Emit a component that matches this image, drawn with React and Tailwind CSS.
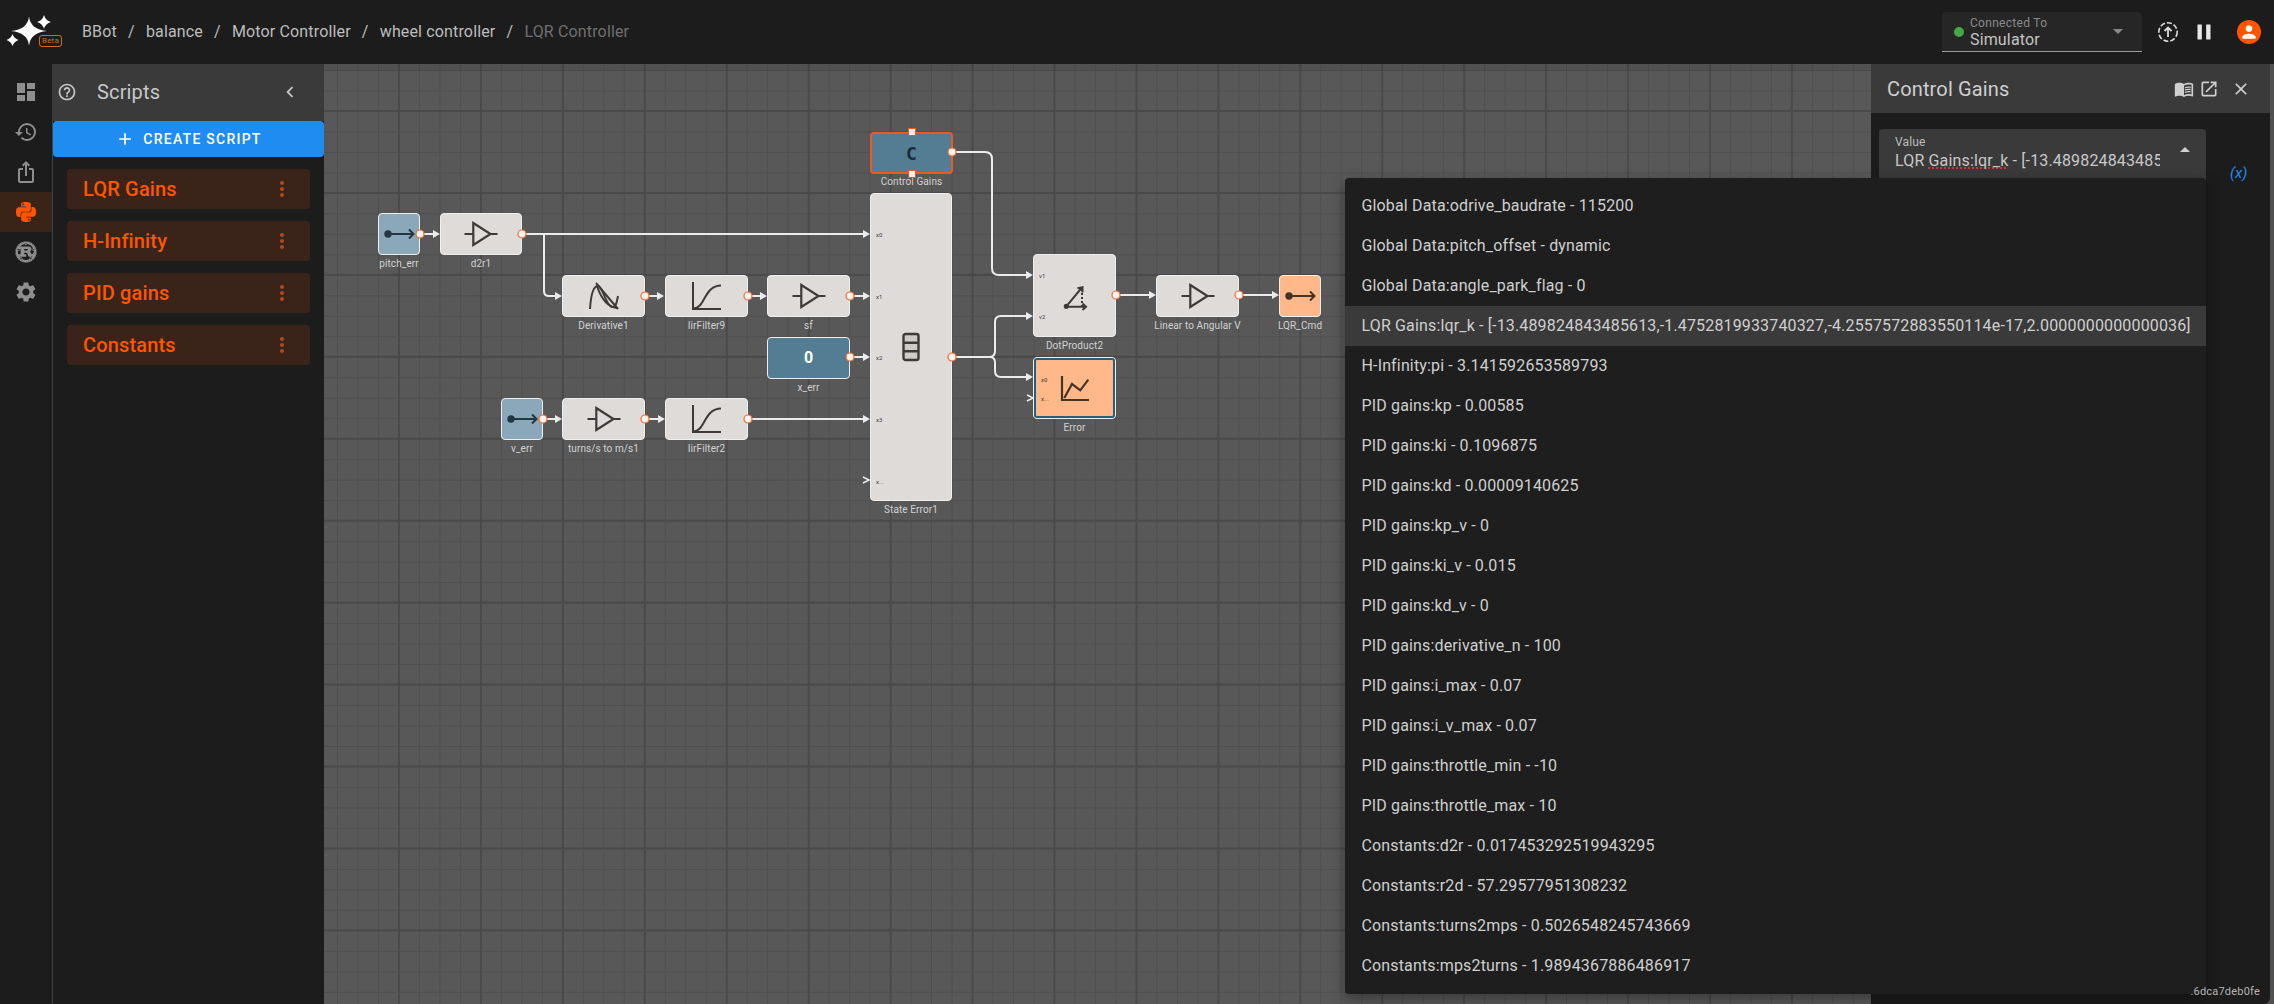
import React from "react";
import { MdDashboard, MdHistory, MdIosShare, MdSettings, MdHelpOutline, MdChevronLeft, MdAdd, MdMoreVert, MdMenuBook, MdOpenInNew, MdClose, MdPerson, MdPause } from "react-icons/md";
import { FaRust } from "react-icons/fa";
import { SiPython } from "react-icons/si";

const crumbs = ["BBot", "balance", "Motor Controller", "wheel controller"];
const scripts = ["LQR Gains", "H-Infinity", "PID gains", "Constants"];
const options = [
  "Global Data:odrive_baudrate - 115200",
  "Global Data:pitch_offset - dynamic",
  "Global Data:angle_park_flag - 0",
  "LQR Gains:lqr_k - [-13.489824843485613,-1.4752819933740327,-4.2557572883550114e-17,2.0000000000000036]",
  "H-Infinity:pi - 3.141592653589793",
  "PID gains:kp - 0.00585",
  "PID gains:ki - 0.1096875",
  "PID gains:kd - 0.00009140625",
  "PID gains:kp_v - 0",
  "PID gains:ki_v - 0.015",
  "PID gains:kd_v - 0",
  "PID gains:derivative_n - 100",
  "PID gains:i_max - 0.07",
  "PID gains:i_v_max - 0.07",
  "PID gains:throttle_min - -10",
  "PID gains:throttle_max - 10",
  "Constants:d2r - 0.017453292519943295",
  "Constants:r2d - 57.29577951308232",
  "Constants:turns2mps - 0.5026548245743669",
  "Constants:mps2turns - 1.9894367886486917",
];

function Gain() {
  return (
    <svg width="36" height="26" viewBox="0 0 36 26" fill="none" stroke="currentColor" strokeWidth="2.2">
      <path d="M1.5 13H10M34.5 13H27.5" />
      <path d="M10.3 2L27.5 13L10.3 24Z" />
    </svg>
  );
}
function Lpf() {
  return (
    <svg width="34" height="30" viewBox="0 0 34 30" fill="none" stroke="currentColor" strokeWidth="2">
      <path d="M3 1V28H31" />
      <path d="M3.5 27.5C15 27.5 14 4.5 31 4.5" />
    </svg>
  );
}
function Deriv() {
  return (
    <svg width="36" height="30" viewBox="0 0 36 30" fill="none" stroke="currentColor" strokeWidth="2">
      <path d="M4 28C5 12 8 5 12 5C17 5 19 24 26 26C30 27 31 20 32 15" />
      <path d="M10 2L32 28" />
      <path d="M11 5C15 17 21 26 31 27" />
    </svg>
  );
}
function Mux() {
  return (
    <svg width="18" height="30" viewBox="0 0 18 30" fill="#cfcbc9" stroke="currentColor" strokeWidth="2.4">
      <rect x="1.5" y="2" width="15" height="26" rx="2" />
      <path d="M1.5 10.7H16.5M1.5 19.3H16.5" />
    </svg>
  );
}
function Dot() {
  return (
    <svg width="32" height="32" viewBox="0 0 32 32" fill="none" stroke="currentColor" strokeWidth="2">
      <circle cx="7.3" cy="26.3" r="1.6" fill="currentColor" />
      <path d="M7.3 26.3L23 7.5M18.5 8.3L23.5 7.3L23.5 12.5" />
      <path d="M7.3 26.7H27M23.5 23.5L27 26.7L23.5 30" />
      <path d="M23 9V26" strokeDasharray="2 2" />
    </svg>
  );
}
function Scope() {
  return (
    <svg width="32" height="30" viewBox="0 0 32 30" fill="none" stroke="currentColor" strokeWidth="2.2">
      <path d="M3 3V27H30" />
      <path d="M5.3 25L13 11L21.3 17.3L29.3 6.7" />
    </svg>
  );
}
function PortIcon() {
  return (
    <svg width="32" height="16" viewBox="0 0 32 16" fill="none" stroke="currentColor" strokeWidth="2">
      <circle cx="5" cy="8" r="3.7" fill="currentColor" stroke="none" />
      <path d="M5 8H30.5M26 3.5L30.5 8L26 12.5" />
    </svg>
  );
}

const G = "bg-[#dfdbd9] text-[#3f3a38]";
const B = "bg-[#8aa8ba] text-[#243644]";
const K = "bg-[#537d92] text-white";
const O = "bg-[#ffb88a] text-[#453326]";

const nodes = [
  { l: 378, t: 213, w: 42, h: 42, c: B, i: <PortIcon />, n: "pitch_err" },
  { l: 440, t: 213, w: 82, h: 42, c: G, i: <Gain />, n: "d2r1" },
  { l: 562, t: 275, w: 83, h: 42, c: G, i: <Deriv />, n: "Derivative1" },
  { l: 665, t: 275, w: 83, h: 42, c: G, i: <Lpf />, n: "IirFilter9" },
  { l: 767, t: 275, w: 83, h: 42, c: G, i: <Gain />, n: "sf" },
  { l: 767, t: 337, w: 83, h: 42, c: K, i: <span className="text-[16px] font-bold">0</span>, n: "x_err" },
  { l: 501, t: 398, w: 42, h: 42, c: B, i: <PortIcon />, n: "v_err" },
  { l: 562, t: 398, w: 83, h: 42, c: G, i: <Gain />, n: "turns/s to m/s1" },
  { l: 665, t: 398, w: 83, h: 42, c: G, i: <Lpf />, n: "IirFilter2" },
  { l: 870, t: 193, w: 82, h: 308, c: G, i: <Mux />, n: "State Error1", ports: [["x0", 41], ["x1", 103], ["x2", 164], ["x3", 226], ["x...", 288]] },
  { l: 1033, t: 254, w: 83, h: 83, c: G, i: <Dot />, n: "DotProduct2", ports: [["v1", 21], ["v2", 62]] },
  { l: 1156, t: 275, w: 83, h: 42, c: G, i: <Gain />, n: "Linear to Angular V" },
  { l: 1279, t: 275, w: 42, h: 42, c: O, i: <PortIcon />, n: "LQR_Cmd" },
];

function Node({ d }) {
  return (
    <div
      className={`absolute flex items-center justify-center rounded-[4px] border-[1.5px] border-[#efefef] ${d.c}`}
      style={{ left: d.l - 324, top: d.t - 64, width: d.w, height: d.h }}
    >
      {d.i}
      {d.ports &&
        d.ports.map(([p, y]) => (
          <span key={p} className="absolute left-[5px] -translate-y-1/2 text-[6px] leading-none text-[#3f3a38]" style={{ top: y }}>
            {p}
          </span>
        ))}
      <span className="absolute left-1/2 top-full mt-[3px] -translate-x-1/2 whitespace-nowrap text-[10px] leading-[14px] tracking-[0.1px] text-[#d2d2d2]">
        {d.n}
      </span>
    </div>
  );
}

const wires = [
  "M420 234H434",
  "M522 234H864",
  "M544 234V291Q544 296 549 296H556",
  "M645 296H658",
  "M748 296H761",
  "M850 296H864",
  "M850 357H864",
  "M542 419H556",
  "M645 419H659",
  "M748 419H864",
  "M952 357H989Q995 357 995 351V322Q995 316 1001 316H1027",
  "M990 357Q995 357 995 363V371Q995 377 1001 377H1027",
  "M952 152H985Q992 152 992 159V268Q992 275 999 275H1027",
  "M1116 295H1150",
  "M1239 295H1273",
];
const heads = [[440, 234], [870, 234], [562, 296], [664, 296], [767, 296], [870, 296], [870, 357], [562, 419], [665, 419], [870, 419], [1033, 316], [1033, 377], [1033, 275], [1156, 295], [1279, 295]];
const outs = [[420, 234], [522, 234], [645, 296], [748, 296], [850, 296], [850, 357], [543, 419], [645, 419], [748, 419], [952, 357], [1116, 295], [1239, 295], [952, 152]];

function Logo() {
  const star = (x, y, a, b) =>
    `M${x} ${y - b}Q${x + 1.5} ${y - 1.5} ${x + a} ${y}Q${x + 1.5} ${y + 1.5} ${x} ${y + b}Q${x - 1.5} ${y + 1.5} ${x - a} ${y}Q${x - 1.5} ${y - 1.5} ${x} ${y - b}Z`;
  return (
    <div className="relative h-[64px] w-[82px] shrink-0">
      <svg width="64" height="64" viewBox="0 0 64 64" fill="#fff" className="absolute left-0 top-0">
        <path d={star(29, 31, 18, 14.5)} />
        <path d={star(44, 22, 7, 7)} />
        <path d={star(12.5, 40, 6, 6)} />
      </svg>
      <span className="absolute left-[39px] top-[34.5px] flex h-[12.5px] w-[23px] items-center justify-center rounded-[3px] border border-[#d4691f] text-[8px] leading-none text-[#d4691f]">
        Beta
      </span>
    </div>
  );
}

function Rail() {
  const items = [
    [<MdDashboard size={24} />, false],
    [<MdHistory size={24} />, false],
    [<MdIosShare size={24} />, false],
    [<SiPython size={20} />, true],
    [<FaRust size={22} />, false],
    [<MdSettings size={24} />, false],
  ];
  return (
    <div className="flex w-[52px] shrink-0 flex-col bg-[#1c1c1c] pt-[8px]">
      {items.map(([ic, on], i) => (
        <div key={i} className={`flex h-[40px] items-center justify-center ${on ? "bg-[#3a2418] text-[#ff5500]" : "text-[#8e8e8e]"}`}>
          {ic}
        </div>
      ))}
    </div>
  );
}

function Scripts() {
  return (
    <div className="flex w-[272px] shrink-0 flex-col bg-[#1c1c1c]">
      <div className="flex h-[57px] items-center bg-[#3a3a3a] pb-[2px] pl-[5px] pr-[23px] text-[#c8c8c8]">
        <MdHelpOutline size={20} />
        <span className="ml-[20px] flex-1 text-[20px] tracking-[0.15px]">Scripts</span>
        <MdChevronLeft size={22} />
      </div>
      <div className="flex flex-1 flex-col border-l border-[#444]">
        <div className="flex h-[36px] items-center justify-center gap-[8px] rounded-[4px] bg-[#1e8cf0] text-[14px] font-medium tracking-[1.25px] text-white">
          <MdAdd size={20} />
          CREATE SCRIPT
        </div>
        <div className="flex flex-col gap-[12px] pl-[14px] pr-[14px] pt-[12px]">
          {scripts.map((s) => (
            <div key={s} className="flex h-[40px] items-center justify-between rounded-[4px] bg-[#3a2419] pl-[16px] pr-[16px] text-[20px] font-medium tracking-[0.15px] text-[#ff5500]">
              {s}
              <MdMoreVert size={24} className="text-[#b34a14]" />
            </div>
          ))}
        </div>
      </div>
    </div>
  );
}

function Canvas() {
  return (
    <div className="relative min-w-0 flex-1 overflow-hidden bg-[#585858] bg-[linear-gradient(#4a4a4a_2px,transparent_2px),linear-gradient(90deg,#4a4a4a_2px,transparent_2px),linear-gradient(#4f4f4f_1px,transparent_1px),linear-gradient(90deg,#4f4f4f_1px,transparent_1px)] bg-[size:81.94px_81.94px,81.94px_81.94px,20.485px_20.485px,20.485px_20.485px] bg-[position:0_46px,74px_0,0_6px,13px_0]">
      <div className="absolute inset-x-0 top-0 h-[7px] bg-black/8" />
      <svg className="absolute left-0 top-0" width="1547" height="940" viewBox="324 64 1547 940" fill="none">
        {wires.map((d) => (
          <path key={d} d={d} stroke="#ececec" strokeWidth="2" />
        ))}
        {heads.map(([x, y]) => (
          <path key={`${x}-${y}`} d={`M${x} ${y}L${x - 7} ${y - 4}V${y + 4}Z`} fill="#ececec" />
        ))}
        <path d="M863 477L869 480L863 483M1027 395L1033 398L1027 401" stroke="#ececec" strokeWidth="1.5" />
      </svg>
      {nodes.map((d) => (
        <Node key={d.n} d={d} />
      ))}
      <div className="absolute left-[546px] top-[68px] flex h-[42px] w-[83px] items-center justify-center rounded-[4px] border-2 border-[#f0581f] bg-[#537d92] font-['DejaVu_Sans_Mono',monospace] text-[18px] font-bold text-[#1a2a38]">
        C
        <span className="absolute left-1/2 top-full mt-[3px] -translate-x-1/2 whitespace-nowrap font-['Roboto',sans-serif] text-[10px] font-normal leading-[14px] tracking-[0.1px] text-[#d2d2d2]">
          Control Gains
        </span>
        <span className="absolute -top-[6px] left-1/2 h-[8px] w-[8px] -translate-x-1/2 border border-[#f0581f] bg-[#f4f0ee]" />
        <span className="absolute -bottom-[6px] left-1/2 h-[8px] w-[8px] -translate-x-1/2 border border-[#f0581f] bg-[#f4f0ee]" />
      </div>
      <div className="absolute left-[709px] top-[293px] flex h-[62px] w-[83px] items-center justify-center rounded-[4px] border border-[#efefef] bg-[#ffb88a] text-[#453326] outline-2 -outline-offset-3 outline-[#27607f]">
        <Scope />
        <span className="absolute left-[7px] top-[22px] -translate-y-1/2 text-[6px] leading-none">x0</span>
        <span className="absolute left-[7px] top-[41px] -translate-y-1/2 text-[6px] leading-none">x...</span>
        <span className="absolute left-1/2 top-full mt-[3px] -translate-x-1/2 whitespace-nowrap text-[10px] leading-[14px] tracking-[0.1px] text-[#d2d2d2]">
          Error
        </span>
      </div>
      <svg className="absolute left-0 top-0" width="1547" height="940" viewBox="324 64 1547 940">
        {outs.map(([x, y]) => (
          <circle key={`${x}-${y}`} cx={x} cy={y} r="4" fill="#fff4ee" stroke="#f0692f" strokeWidth="1.2" />
        ))}
      </svg>
    </div>
  );
}

function Inspector() {
  return (
    <div className="flex w-[399px] shrink-0 flex-col rounded-br-[6px] bg-[#1c1c1c]">
      <div className="flex h-[49px] items-center bg-[#3a3a3a] pl-[16px] pr-[19px] text-[#cfcfcf]">
        <span className="flex-1 text-[20px] tracking-[0.15px]">Control Gains</span>
        <MdMenuBook size={20} />
        <MdOpenInNew size={20} className="ml-[5px]" />
        <MdClose size={20} className="ml-[12px]" />
      </div>
      <div className="flex items-start pl-[8px] pt-[16px]">
        <div className="relative h-[56px] w-[327px] rounded-t-[4px] bg-[#3a3a3a] pl-[16px] pt-[5px]">
          <div className="text-[12px] leading-[16px] tracking-[0.15px] text-[#bdbdbd]">Value</div>
          <div className="w-[265px] overflow-hidden whitespace-nowrap text-[16px] leading-[22px] tracking-[0.15px] text-[#c8c8c8]">
            LQR <span className="underline decoration-[#d93030] decoration-dotted decoration-2">Gains:lqr_k</span> - [-13.4898248434856
          </div>
          <span className="absolute right-[16px] top-[18px] h-0 w-0 border-x-[5px] border-b-[5px] border-x-transparent border-b-[#d0d0d0]" />
        </div>
        <span className="ml-[24px] mt-[33px] text-[15px] italic text-[#1e8cf0]">(x)</span>
      </div>
    </div>
  );
}

export default function App() {
  return (
    <div className="relative flex h-[1004px] w-[2274px] flex-col overflow-hidden bg-[#1c1c1c] font-['Roboto',sans-serif]">
      <header className="flex h-[64px] shrink-0 items-center bg-[#1c1c1c] text-[16px] tracking-[0.15px] text-[#bdbdbd]">
        <Logo />
        {crumbs.map((c) => (
          <React.Fragment key={c}>
            <span>{c}</span>
            <span className="w-[29px] text-center">/</span>
          </React.Fragment>
        ))}
        <span className="text-[#6f6f6f]">LQR Controller</span>
        <div className="ml-auto flex h-[40px] w-[200px] items-center rounded-t-[4px] border-b border-[#9a9a9a] bg-[#262626] pl-[12px]">
          <span className="h-[10px] w-[10px] rounded-full bg-[#43a845]" />
          <div className="ml-[6px] flex-1 pt-[3px]">
            <div className="text-[12px] leading-[14px] tracking-[0.3px] text-[#8a8a8a]">Connected To</div>
            <div className="text-[16px] leading-[20px] text-[#c4c4c4]">Simulator</div>
          </div>
          <span className="mr-[19px] h-0 w-0 border-x-[5px] border-t-[5px] border-x-transparent border-t-[#8a8a8a]" />
        </div>
        <svg width="22" height="22" viewBox="0 0 22 22" fill="none" stroke="#dcdcdc" strokeWidth="1.6" className="ml-[15px]">
          <circle cx="11" cy="11" r="9.2" strokeDasharray="5 2" />
          <path d="M11 16V7M7.5 10L11 6.5L14.5 10" strokeWidth="1.8" />
        </svg>
        <MdPause size={26} className="ml-[12px] text-[#e8e8e8]" />
        <span className="ml-[20px] mr-[13px] flex h-[24px] w-[24px] items-center justify-center rounded-full bg-[#ff5500] text-white">
          <MdPerson size={20} />
        </span>
      </header>
      <div className="flex min-h-0 flex-1 bg-[#505050]">
        <Rail />
        <Scripts />
        <Canvas />
        <Inspector />
        <div className="w-[4px] shrink-0" />
      </div>
      <div className="absolute left-[1345px] top-[178px] w-[861px] rounded-[4px] bg-[#1e1e1e] py-[8px] shadow-[0_5px_14px_rgba(0,0,0,0.35)]">
        {options.map((o, i) => (
          <div key={o} className={`flex h-[40px] items-center whitespace-nowrap pl-[16.5px] text-[16px] tracking-[0.15px] text-[#cfcfcf] ${i === 3 ? "bg-[#3a3a3a]" : ""}`}>
            {o}
          </div>
        ))}
      </div>
      <span className="absolute right-[14px] top-[985px] text-[11px] leading-[14px] tracking-[0.2px] text-[#b5b5b5]">.6dca7deb0fe</span>
    </div>
  );
}
